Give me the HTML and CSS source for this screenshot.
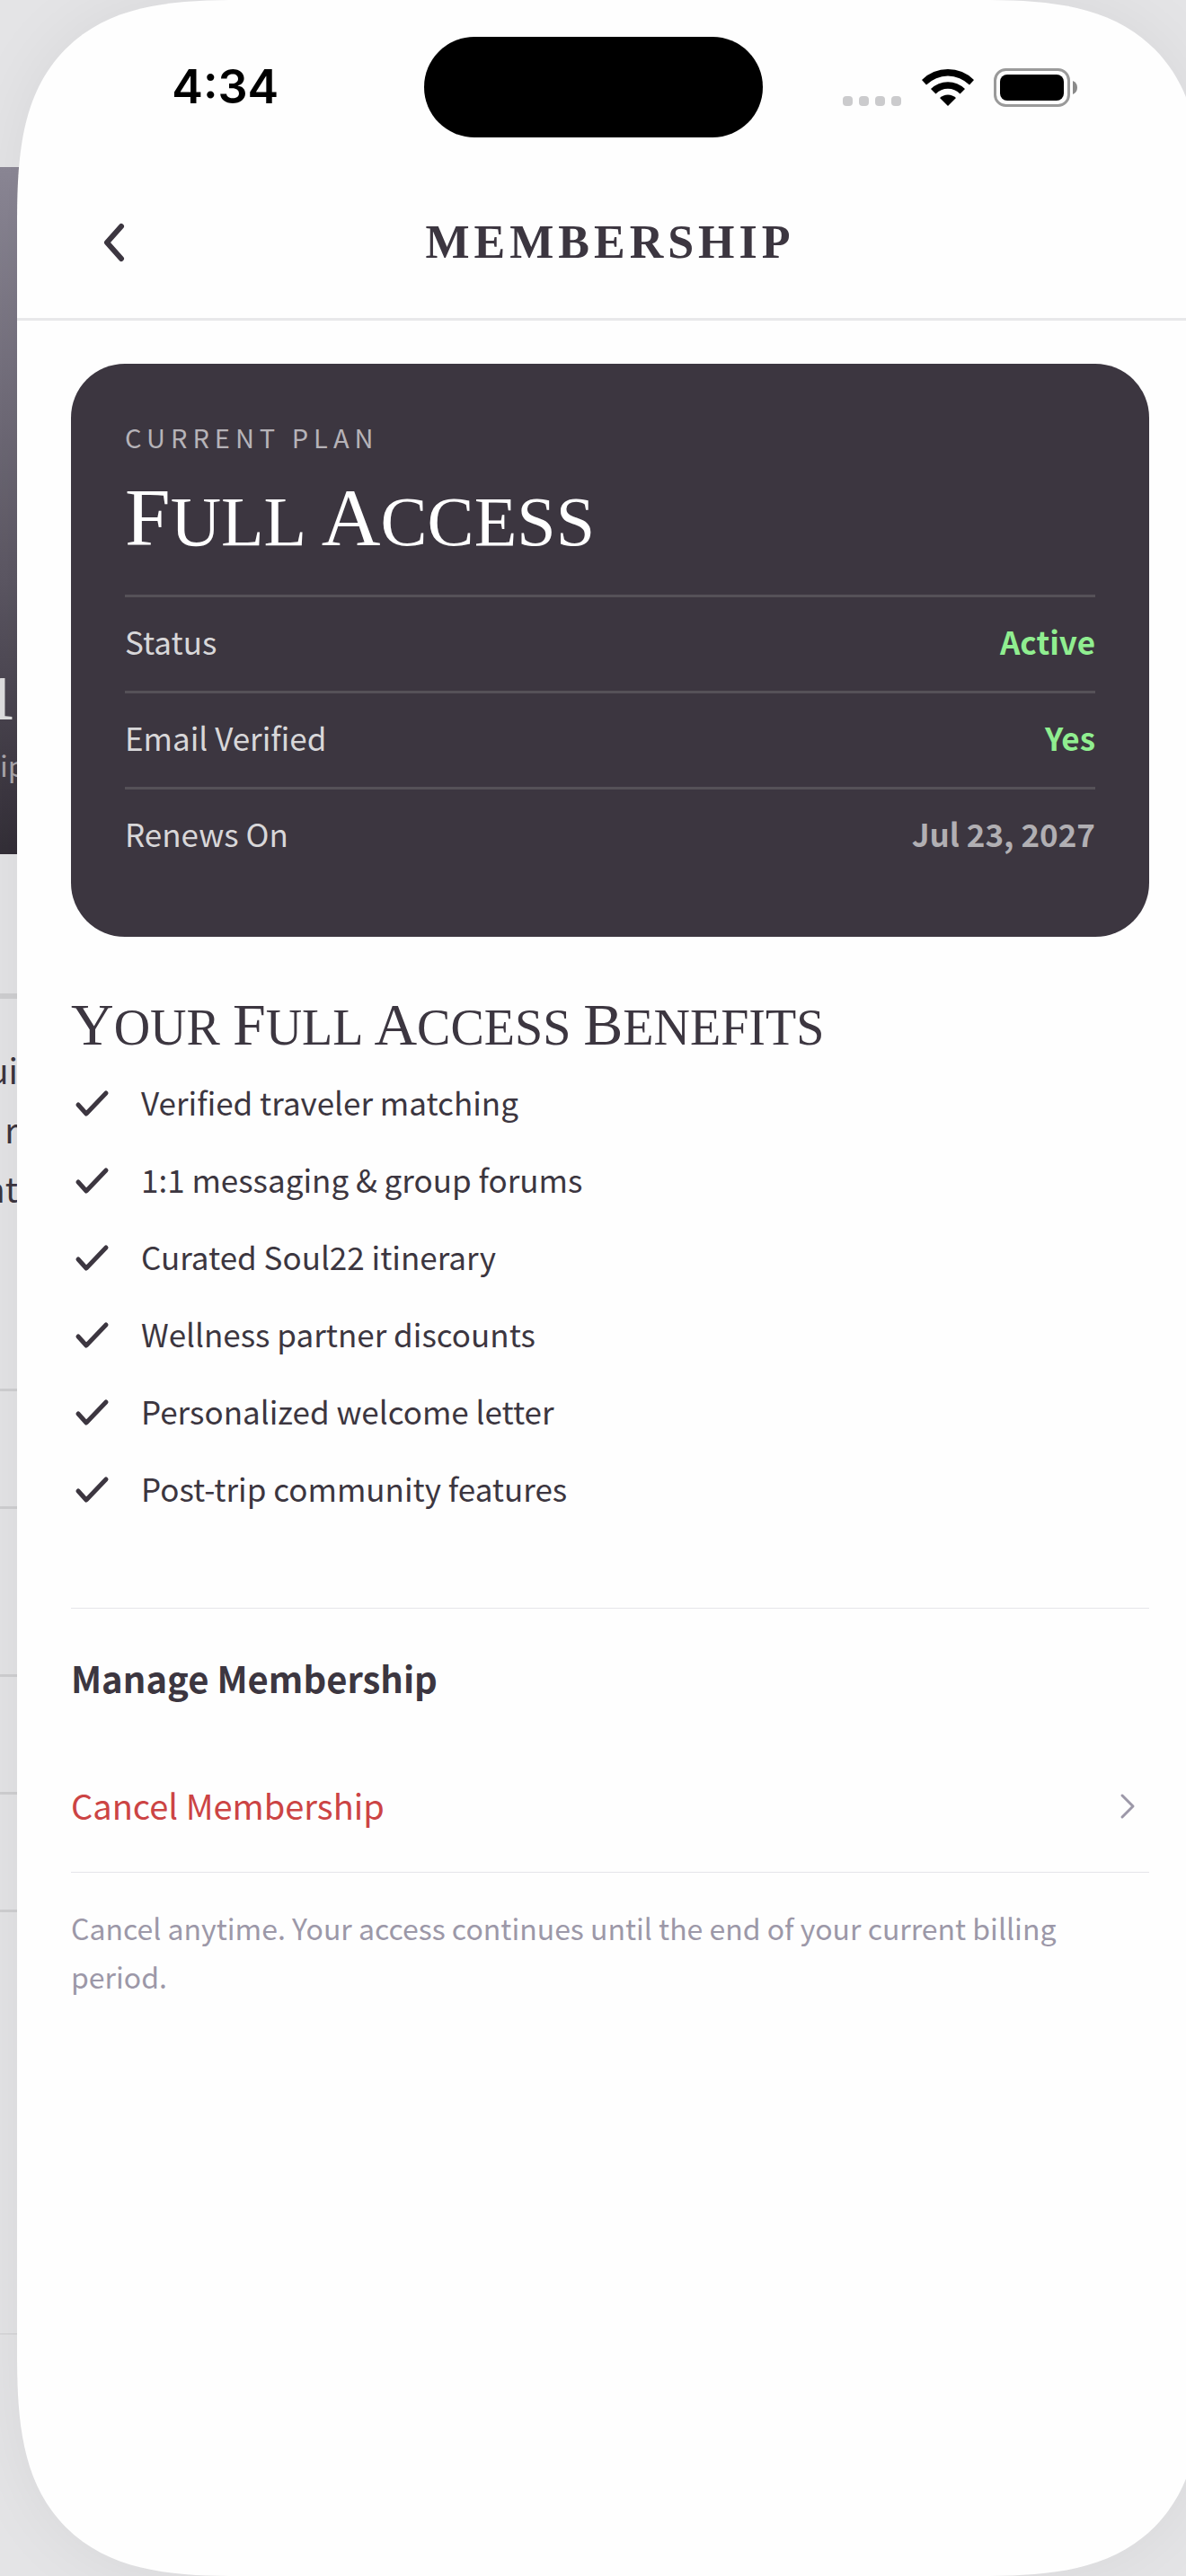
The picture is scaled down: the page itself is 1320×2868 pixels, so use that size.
FILE: index.html
```html
<!DOCTYPE html>
<html lang="en">
<head>
  <meta charset="UTF-8">
  <meta name="viewport" content="width=device-width, initial-scale=1">
  <title>Membership</title>
  <link rel="stylesheet" href="styles.css">
</head>
<body>

<div class="stage">

  <!-- previous screen, still showing at the left edge during the swipe -->
  <div class="previous" aria-hidden="true">
    <div class="prev-hero">
      <div class="prev-name">1</div>
      <div class="prev-sub">ip</div>
    </div>
    <div class="prev-tabs"></div>
    <div class="prev-bio"><span>ui</span><span>, r</span><span>nt</span></div>
    <div class="prev-row short"></div>
    <div class="prev-row tall"></div>
    <div class="prev-row short"></div>
    <div class="prev-row short"></div>
    <div class="prev-row last"></div>
  </div>

  <div class="panel">
    <header class="nav">
      <button type="button" class="back" aria-label="Back">
        <svg width="30" height="48" viewBox="0 0 30 48"><path d="M24 6 L8 24 L24 42"/></svg>
      </button>
      <h1>Membership</h1>
    </header>

    <main>
      <section class="plan-card">
        <div class="plan-label">Current Plan</div>
        <h2 class="plan-name"><span class="cap">F</span>ull <span class="cap">A</span>ccess</h2>
        <dl>
          <div class="plan-row"><dt>Status</dt><dd class="good">Active</dd></div>
          <div class="plan-row"><dt>Email Verified</dt><dd class="good">Yes</dd></div>
          <div class="plan-row"><dt>Renews On</dt><dd>Jul 23, 2027</dd></div>
        </dl>
      </section>

      <section class="benefits">
        <h2><span class="cap">Y</span>our <span class="cap">F</span>ull <span class="cap">A</span>ccess <span class="cap">B</span>enefits</h2>
        <ul>
          <li><svg class="check" viewBox="0 0 48 48"><path d="M8 27 L17 37 L39 14"/></svg>Verified traveler matching</li>
          <li><svg class="check" viewBox="0 0 48 48"><path d="M8 27 L17 37 L39 14"/></svg>1:1 messaging &amp; group forums</li>
          <li><svg class="check" viewBox="0 0 48 48"><path d="M8 27 L17 37 L39 14"/></svg>Curated Soul22 itinerary</li>
          <li><svg class="check" viewBox="0 0 48 48"><path d="M8 27 L17 37 L39 14"/></svg>Wellness partner discounts</li>
          <li><svg class="check" viewBox="0 0 48 48"><path d="M8 27 L17 37 L39 14"/></svg>Personalized welcome letter</li>
          <li><svg class="check" viewBox="0 0 48 48"><path d="M8 27 L17 37 L39 14"/></svg>Post-trip community features</li>
        </ul>
      </section>

      <section class="manage">
        <h3>Manage Membership</h3>
        <button type="button" class="cancel">
          <span>Cancel Membership</span>
          <svg width="20" height="32" viewBox="0 0 20 32"><path d="M4 5 L16 17 L4 29"/></svg>
        </button>
        <p class="note">Cancel anytime. Your access continues until the end of your current billing period.</p>
      </section>
    </main>
  </div>

  <div class="status-bar">
    <div class="time">4:34</div>
    <div class="island"></div>
    <div class="status-icons">
      <svg width="66" height="42" viewBox="0 0 66 42" fill="#cbcbcd">
        <rect x="0" y="31" width="11" height="11" rx="4"/>
        <rect x="18" y="31" width="11" height="11" rx="4"/>
        <rect x="36" y="31" width="11" height="11" rx="4"/>
        <rect x="54" y="31" width="11" height="11" rx="4"/>
      </svg>
      <svg width="58" height="42" viewBox="0 0 58 42">
        <path d="M0 13 A41 41 0 0 1 58 13 L53 18.500 A34 34 0 0 0 5 18.500 Z"/>
        <path d="M10 23 A27 27 0 0 1 48 23 L42.500 28.500 A19 19 0 0 0 15.500 28.500 Z"/>
        <path d="M20 33 A13 13 0 0 1 38 33 L29 42 Z"/>
      </svg>
      <svg width="94" height="43" viewBox="0 0 94 43">
        <rect x="1.500" y="1.500" width="82" height="40" rx="12" fill="none" stroke="#9a9a9a" stroke-width="3"/>
        <rect x="7" y="7" width="71" height="29" rx="8"/>
        <path d="M88 14 Q93 16 93 21.500 Q93 27 88 29 Z" fill="#8a8a8a"/>
      </svg>
    </div>
  </div>

</div>

</body>
</html>
```
FILE: styles.css
```css
* { box-sizing: border-box; }
body {
  margin: 0;
  background: #e4e4e6;
  color: #3c3640;
  font-family: "Noto Sans CJK SC", "Noto Sans", sans-serif;
  font-size: 35px;
  line-height: 50px;
}
h1, h2, h3, p, ul, dl, dd { margin: 0; padding: 0; }
button { border: 0; padding: 0; background: none; font: inherit; cursor: pointer; }
svg { display: block; flex: none; }

.stage { display: grid; min-height: 100vh; overflow: hidden; }
.previous, .panel, .status-bar { grid-area: 1 / 1; }

/* previous screen */
.previous { width: 40px; padding-top: 186px; overflow: hidden; white-space: nowrap; }
.prev-hero,
.prev-bio { display: flex; flex-direction: column; }
.prev-hero {
  height: 765px;
  padding-top: 552px;
  background: linear-gradient(#8c8896, #5c5763 60%, #332e37);
  color: #a9a6ab;
}
.prev-name { align-self: flex-end; padding-right: 23px; font: bold 70px/80px "Liberation Serif", serif; color: #dfdfe0; }
.prev-sub { font-size: 32px; line-height: 66px; }
.prev-tabs { height: 161px; border-bottom: 6px solid #cfcfd1; }
.prev-bio {
  align-items: flex-end;
  height: 437px;
  padding: 46px 20px 0 0;
  border-bottom: 3px solid #cfcfd1;
  font-size: 38px;
  line-height: 66px;
}
.prev-row { border-bottom: 3px solid #cfcfd1; }
.prev-row.short { height: 131px; }
.prev-row.tall { height: 187px; }
.prev-row.last { height: 470px; border-bottom-width: 1px; }

/* membership screen */
.panel {
  margin: 0 -19px 0 19px;
  padding-top: 186px;
  background: #fefefe;
  border-radius: 186px;
  box-shadow: 0 0 80px rgba(0, 0, 0, 0.06);
}
@supports (corner-shape: superellipse(1.5)) {
  .panel { border-radius: 250px; corner-shape: superellipse(1.5); }
}
.nav {
  display: grid;
  grid-template-columns: 120px 1fr 120px;
  align-items: center;
  height: 171px;
  padding: 0 48px;
  border-bottom: 3px solid #e8e8ea;
}
.back { display: flex; align-items: center; justify-content: flex-start; height: 120px; padding-left: 44px; }
.back svg { fill: none; stroke: #3c3640; stroke-width: 6; stroke-linecap: round; stroke-linejoin: round; }
.nav h1 {
  font: bold 52px/60px "Liberation Serif", serif;
  letter-spacing: 5px;
  text-align: center;
  text-transform: uppercase;
}
main { padding: 48px 60px; }

.plan-card { padding: 60px; border-radius: 60px; background: #3c3640; color: #fff; }
.plan-label {
  font-size: 29px;
  line-height: 42px;
  letter-spacing: 6px;
  text-transform: uppercase;
  color: #b6b3b8;
}
.plan-name, .benefits h2 {
  font-family: "Liberation Serif", serif;
  font-weight: normal;
  text-transform: uppercase;
}
.cap { line-height: 0; }
.plan-name { font-size: 78px; line-height: 100px; margin: 24px 0 31px; }
.plan-name .cap { font-size: 91px; }
.plan-row {
  display: flex;
  justify-content: space-between;
  padding: 24px 0 30px;
  border-top: 3px solid #555158;
}
.plan-row dt { color: #d8d7d9; }
.plan-row dd { font-weight: bold; color: #b1afb3; }
.plan-row .good { color: #90ee90; }

.benefits { margin-top: 66px; }
.benefits h2 { font-size: 56px; line-height: 70px; }
.benefits h2 .cap { font-size: 66px; }
.benefits ul { display: grid; gap: 36px; margin: 23px 0 108px; list-style: none; }
.benefits li { display: flex; align-items: center; gap: 30px; }
.check { width: 48px; height: 48px; fill: none; stroke: #3c3640; stroke-width: 5; stroke-linecap: round; stroke-linejoin: round; }

.manage { padding-top: 47px; border-top: 1px solid #e5e5ea; }
.manage h3 { font-size: 40px; line-height: 60px; }
.cancel {
  display: flex;
  align-items: center;
  justify-content: space-between;
  width: 100%;
  padding: 84px 14px 46px 0;
  border-bottom: 1px solid #e5e5ea;
  color: #cc4444;
  font-size: 38px;
  line-height: 56px;
}
.cancel svg { fill: none; stroke: #9c98a8; stroke-width: 3; stroke-linecap: round; stroke-linejoin: round; }
.note { margin-top: 34px; font-size: 32px; line-height: 54px; color: #9c98a8; }

/* status bar sits over both screens */
.status-bar {
  display: grid;
  grid-template-columns: 1fr auto 1fr;
  align-items: center;
  align-self: start;
  z-index: 1;
  padding-top: 41px;
  color: #000;
}
.time { padding-left: 30px; text-align: center; font: 600 52px/60px Inter, sans-serif; }
.island { width: 377px; height: 112px; border-radius: 56px; background: #000; }
.status-icons { display: flex; justify-content: center; gap: 22px; padding-right: 30px; }
```
